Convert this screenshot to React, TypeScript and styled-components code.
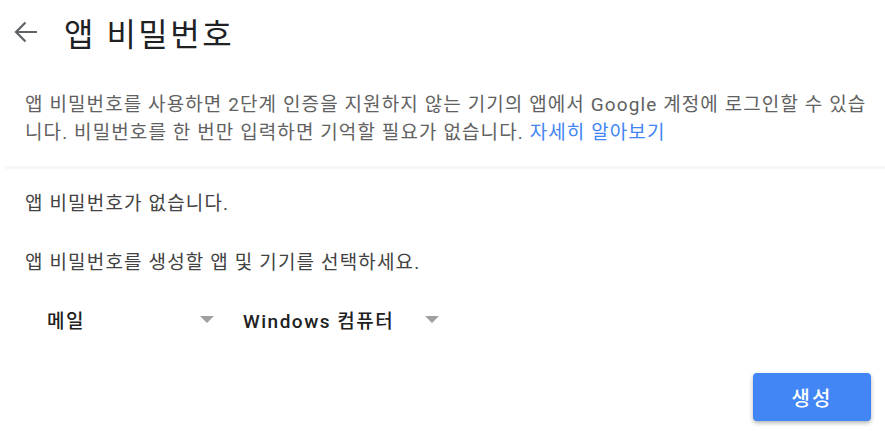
import React from "react";
import styled, { createGlobalStyle } from "styled-components";

const GlobalStyle = createGlobalStyle`
  html, body {
    margin: 0;
    padding: 0;
    background: #fff;
  }
  body {
    font-family: Roboto, "Noto Sans CJK KR", sans-serif;
  }
`;

const Page = styled.div`
  width: 885px;
  height: 434px;
  overflow: hidden;
  background: #fff;
`;

const Header = styled.div`
  display: flex;
  align-items: center;
  height: 64px;
  padding-left: 12px;
`;

const BackButton = styled.button`
  display: flex;
  align-items: center;
  justify-content: center;
  width: 28px;
  height: 28px;
  padding: 0;
  margin-right: 24px;
  border: none;
  background: none;
  cursor: pointer;
`;

const Title = styled.h1`
  margin: 0;
  font-size: 32px;
  font-weight: 400;
  color: #202124;
  letter-spacing: 2.5px;
`;

const Intro = styled.p`
  margin: 0;
  width: 842px;
  padding: 27px 0 19px 25px;
  font-size: 19px;
  line-height: 28px;
  color: #616161;
  letter-spacing: 1.1px;
  word-break: break-all;
`;

const Link = styled.a`
  color: #4285f4;
  text-decoration: none;
`;

const Divider = styled.div`
  margin-left: 5px;
  height: 3px;
  background: #f6f6f6;
`;

const Body = styled.div`
  padding: 21px 25px 0;
  display: flex;
  flex-direction: column;
`;

const Message = styled.p<{ gap: number }>`
  margin: 0 0 ${(p) => p.gap}px;
  font-size: 19px;
  line-height: 28px;
  color: #424242;
  letter-spacing: 1.15px;
`;

const SelectRow = styled.div`
  display: flex;
  align-items: center;
  height: 40px;
`;

const Select = styled.div<{ width: number }>`
  display: flex;
  align-items: center;
  justify-content: space-between;
  width: ${(p) => p.width}px;
  padding-left: 22px;
  box-sizing: border-box;
  font-size: 19px;
  font-weight: 500;
  letter-spacing: 1.5px;
  color: #212121;
  cursor: pointer;
`;

const Caret = styled.span`
  width: 0;
  height: 0;
  border-left: 7px solid transparent;
  border-right: 7px solid transparent;
  border-top: 7px solid #a0a0a0;
  margin-right: 7px;
`;

const Actions = styled.div`
  display: flex;
  justify-content: flex-end;
  padding: 34px 14px 0 0;
`;

const PrimaryButton = styled.button`
  width: 118px;
  height: 48px;
  border: none;
  border-radius: 4px;
  background: #4285f4;
  color: #fff;
  font-family: Roboto, "Noto Sans CJK KR", sans-serif;
  font-size: 20px;
  font-weight: 500;
  letter-spacing: 2px;
  box-shadow: 0 2px 4px rgba(0, 0, 0, 0.3);
  cursor: pointer;
`;

const ArrowBack = () => (
  <svg width="26" height="24" viewBox="0 0 26 24" fill="none">
    <path
      d="M24 12H3M12.5 2.5L3 12l9.5 9.5"
      stroke="#5f6368"
      strokeWidth="2.2"
    />
  </svg>
);

const App: React.FC = () => {
  return (
    <Page>
      <GlobalStyle />
      <Header>
        <BackButton aria-label="뒤로">
          <ArrowBack />
        </BackButton>
        <Title>앱 비밀번호</Title>
      </Header>
      <Intro>
        앱 비밀번호를 사용하면 2단계 인증을 지원하지 않는 기기의 앱에서 Google
        계정에 로그인할 수 있습니다. 비밀번호를 한 번만 입력하면 기억할 필요가
        없습니다. <Link href="#">자세히 알아보기</Link>
      </Intro>
      <Divider />
      <Body>
        <Message gap={31}>앱 비밀번호가 없습니다.</Message>
        <Message gap={22}>앱 비밀번호를 생성할 앱 및 기기를 선택하세요.</Message>
        <SelectRow>
          <Select width={196}>
            메일
            <Caret />
          </Select>
          <Select width={225}>
            Windows 컴퓨터
            <Caret />
          </Select>
        </SelectRow>
      </Body>
      <Actions>
        <PrimaryButton>생성</PrimaryButton>
      </Actions>
    </Page>
  );
};

export default App;
